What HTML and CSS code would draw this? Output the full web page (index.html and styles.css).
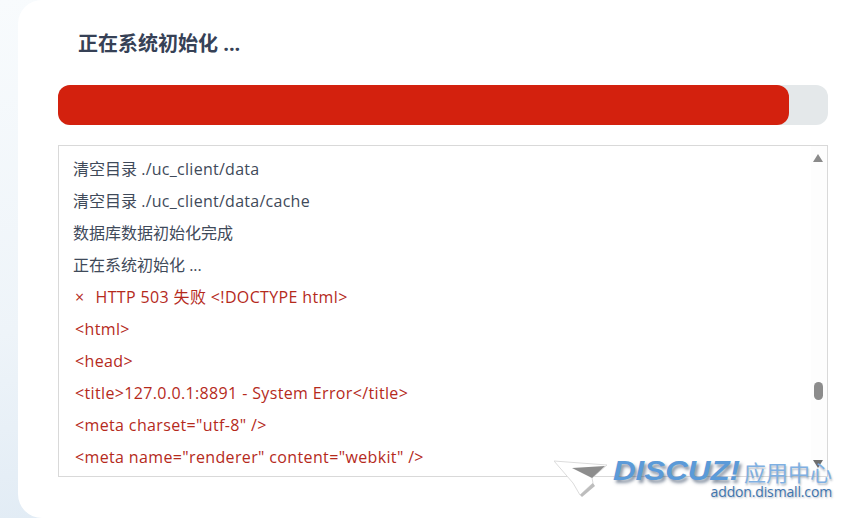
FILE: index.html
```html
<!DOCTYPE html>
<html>
<head>
    <title>正在系统初始化</title>
    <link rel="stylesheet" href="styles.css">
</head>
<body>
    <div class="card">
        <h2 class="step-title">正在系统初始化 ...</h2>
        <div class="progress">
            <div class="progress-bar"></div>
        </div>
        <div class="log">
            <ul class="log-list">
                <li>清空目录 <span class="path">./uc_client/data</span></li>
                <li>清空目录 <span class="path">./uc_client/data/cache</span></li>
                <li>数据库数据初始化完成</li>
                <li>正在系统初始化 ...</li>
                <li class="error"><span class="error-mark">×</span>HTTP 503 失败 &lt;!DOCTYPE html&gt;</li>
                <li class="error">&lt;html&gt;</li>
                <li class="error">&lt;head&gt;</li>
                <li class="error">&lt;title&gt;127.0.0.1:8891 - System Error&lt;/title&gt;</li>
                <li class="error">&lt;meta charset="utf-8" /&gt;</li>
                <li class="error">&lt;meta name="renderer" content="webkit" /&gt;</li>
            </ul>
            <div class="scrollbar">
                <svg class="arrow" width="10" height="8" viewBox="0 0 10 8"><path d="M5 0 L10 8 L0 8 Z" fill="#8a8a8a"/></svg>
                <div class="thumb"></div>
                <svg class="arrow" width="10" height="8" viewBox="0 0 10 8"><path d="M5 8 L10 0 L0 0 Z" fill="#6e6e6e"/></svg>
            </div>
        </div>
    </div>

    <!-- watermark -->
    <div class="watermark">
        <svg class="cursor" width="58" height="42" viewBox="0 0 58 42">
            <path d="M0 3 L53 7 L38 20 L39 25 L26 37 L19 25 Z" fill="#fff" stroke="#dcdcdc" stroke-width="1"/>
            <path d="M18 10 L51 8 L38 20 Z" fill="#8d8d8d"/>
            <path d="M39 25 L26 37 L28 39 L41 28 Z" fill="#bdbdbd"/>
        </svg>
        <div class="mark-text">
            <div class="mark-top"><span class="mark-logo">DISCUZ!</span><span class="mark-cn">应用中心</span></div>
            <div class="mark-url">addon.dismall.com</div>
        </div>
    </div>
</body>
</html>
```

FILE: styles.css
```css
html, body {
    height: 100%;
}
body {
    margin: 0;
    padding: 0 0 0 18px;
    box-sizing: border-box;
    overflow: hidden;
    font-family: "Open Sans", "Noto Sans CJK SC", sans-serif;
    background: linear-gradient(170deg, #f8fbfd 0%, #eef4f9 50%, #d9e6f2 100%);
}
.card {
    height: 518px;
    box-sizing: border-box;
    padding: 28px 23px 0 40px;
    background-color: white;
    border-radius: 24px 0 0 24px;
}
.step-title {
    margin: 0 0 25px 20px;
    font-size: 20px;
    line-height: 32px;
    font-weight: bold;
    color: #364156;
}
.progress {
    height: 40px;
    background-color: #e4e8ea;
    border-radius: 12px;
}
.progress-bar {
    width: 731px;
    height: 40px;
    background-color: #d3210e;
    border-radius: 12px;
}
.log {
    display: flex;
    height: 332px;
    margin-top: 20px;
    border: 1px solid #d9d9d9;
    box-sizing: border-box;
    overflow: hidden;
}
.log-list {
    flex: 1;
    margin: 0;
    padding: 7px 0 0 14px;
    list-style: none;
    font-size: 16px;
    line-height: 32px;
    color: #3f4a5a;
}
.log-list li {
    height: 32px;
    white-space: nowrap;
}
.path {
    letter-spacing: 0.27px;
}
.log-list .error {
    padding-left: 2px;
    letter-spacing: 0.36px;
    color: #b52a1c;
}
.error-mark {
    margin-right: 11px;
}
.scrollbar {
    display: flex;
    flex-direction: column;
    align-items: center;
    width: 16px;
    padding: 8px 2px 8px 0;
    box-sizing: border-box;
    background-color: #fdfdfd;
}
.thumb {
    width: 9px;
    height: 18px;
    margin-top: 220px;
    margin-bottom: auto;
    background-color: #8c8c8c;
    border-radius: 5px;
}
.arrow {
    display: block;
}
.watermark {
    position: absolute;
    left: 554px;
    top: 458px;
    display: flex;
}
.mark-text {
    margin-left: 1px;
}
.mark-top {
    display: flex;
    align-items: center;
    height: 26px;
    white-space: nowrap;
}
.mark-logo {
    display: inline-block;
    width: 125px;
    font-family: "Liberation Sans", sans-serif;
    font-size: 27px;
    line-height: 1;
    font-weight: bold;
    font-style: italic;
    color: #5b9ad8;
    text-shadow: 2px 3px 3px rgba(40, 60, 90, 0.55);
    transform: scaleX(1.16);
    transform-origin: left center;
}
.mark-cn {
    margin-left: 6px;
    font-family: "Noto Sans CJK SC", sans-serif;
    font-size: 22px;
    line-height: 1;
    color: #7fb0e2;
    text-shadow: 1px 2px 2px rgba(40, 60, 90, 0.35);
}
.mark-url {
    font-family: "Open Sans", sans-serif;
    font-size: 14px;
    line-height: 16px;
    letter-spacing: -0.15px;
    text-align: right;
    color: #3f74ad;
    text-shadow: 1px 1px 2px rgba(40, 60, 90, 0.35);
}
```
